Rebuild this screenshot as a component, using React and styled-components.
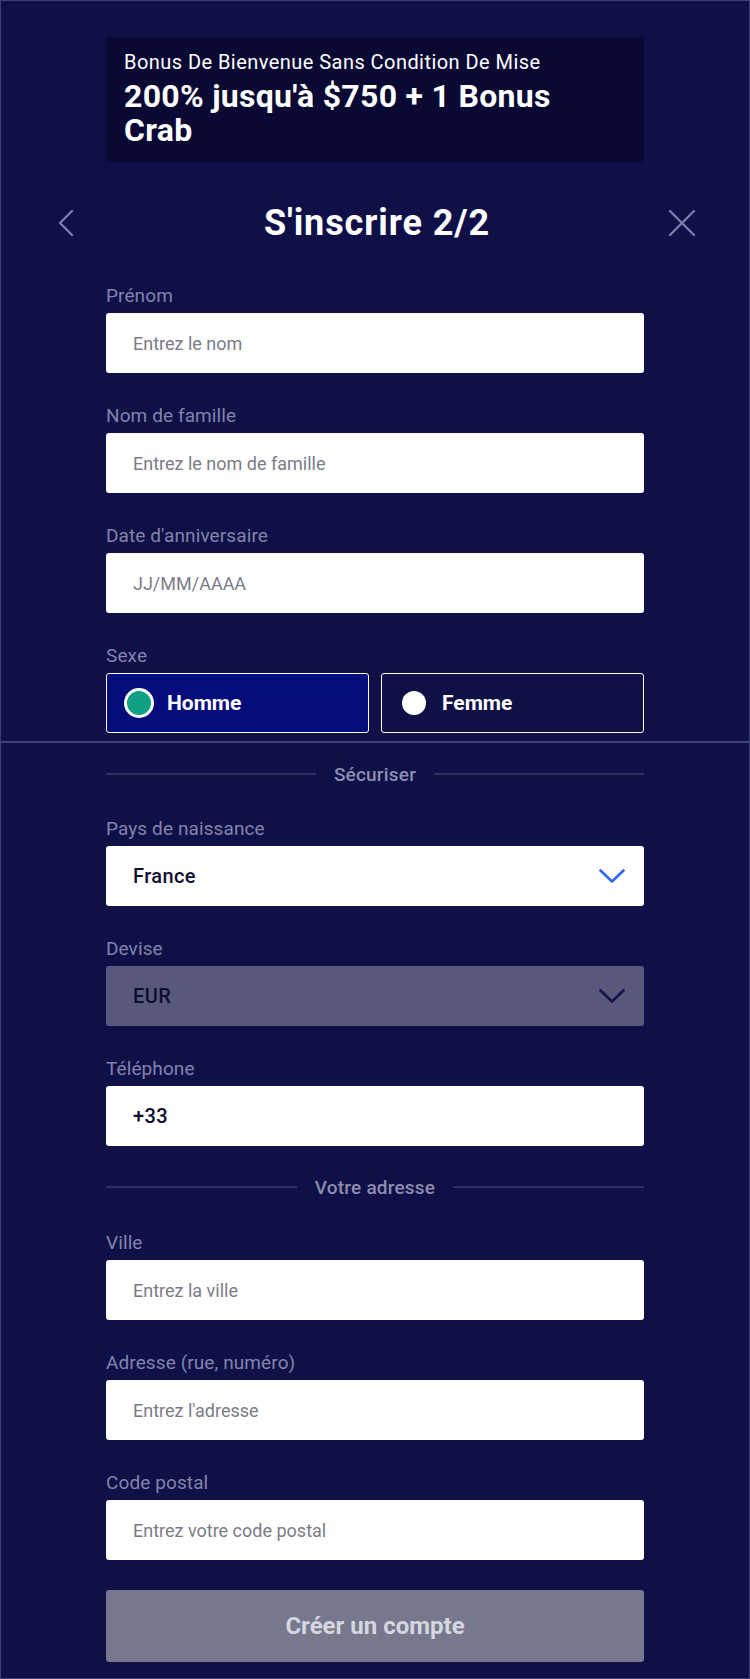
import React from 'react'
import styled, { createGlobalStyle } from 'styled-components'

const GlobalStyle = createGlobalStyle`
	* { box-sizing: border-box; }
	html, body {
		margin: 0;
		padding: 0;
		background: #0f1048;
	}
	body {
		font-family: Roboto, "Liberation Sans", sans-serif;
	}
`

const Page = styled.div`
	min-height: 1679px;
	border: 1px solid #3c3f71;
	background: #0f1048;
	padding: 36px 0 16px;
`

const Column = styled.div`
	width: 538px;
	margin: 0 auto;
`

const Bonus = styled.div`
	width: 538px;
	margin: 0 auto;
	background: #0a0934;
	padding: 14px 18px 15px;
	color: #fff;
`

const BonusLead = styled.div`
	font-size: 20px;
	line-height: 22px;
	letter-spacing: 0.45px;
`

const BonusHeadline = styled.div`
	margin-top: 6px;
	max-width: 450px;
	font-size: 32px;
	line-height: 34px;
	font-weight: 700;
	letter-spacing: 0.3px;
`

const Header = styled.div`
	display: grid;
	grid-template-columns: 1fr auto 1fr;
	align-items: center;
	height: 40px;
	margin-top: 41px;
	padding: 0 53px 0 57px;
`

const Title = styled.h1`
	margin: 0;
	font-size: 36px;
	line-height: 40px;
	font-weight: 700;
	letter-spacing: 0.9px;
	color: #fff;
`

const IconButton = styled.button`
	display: flex;
	justify-self: ${p => (p.$end ? 'end' : 'start')};
	padding: 0;
	border: 0;
	background: none;
	cursor: pointer;
`

const Form = styled.form`
	margin-top: 42px;
`

const Field = styled.div`
	display: flex;
	flex-direction: column;
	& + & {
		margin-top: 32px;
	}
`

const Label = styled.label`
	font-size: 19px;
	line-height: 22px;
	letter-spacing: 0.1px;
	color: #8384a8;
	margin-bottom: 6px;
`

const Input = styled.input`
	height: 60px;
	width: 100%;
	border: 0;
	border-radius: 3px;
	background: #fff;
	padding: 0 27px;
	font-family: inherit;
	font-size: ${p => (p.$filled ? '20px' : '18px')};
	font-weight: ${p => (p.$filled ? 500 : 400)};
	letter-spacing: ${p => (p.$filled ? '0.4px' : '0')};
	color: #0d0d30;
	outline: none;

	&::placeholder {
		color: #7b7b88;
	}
`

const Select = styled.div`
	height: 60px;
	display: flex;
	align-items: center;
	justify-content: space-between;
	border-radius: 3px;
	background: ${p => (p.$disabled ? '#58597a' : '#fff')};
	padding: 0 19px 0 27px;
	font-size: 20px;
	font-weight: 500;
	letter-spacing: 0.4px;
	color: #0d0d30;
`

const RadioGroup = styled.div`
	display: grid;
	grid-template-columns: 1fr 1fr;
	gap: 12px;
`

const RadioOption = styled.div`
	height: 60px;
	display: flex;
	align-items: center;
	gap: 13px;
	padding-left: 17px;
	border: 1px solid #fff;
	border-radius: 3px;
	background: ${p => (p.$checked ? '#050c7b' : 'transparent')};
	color: #fff;
	font-size: 21px;
	font-weight: 700;
`

const RadioSlot = styled.span`
	width: 30px;
	height: 30px;
	display: flex;
	align-items: center;
	justify-content: center;
`

const RadioDot = styled.span`
	width: ${p => (p.$checked ? '30px' : '24px')};
	height: ${p => (p.$checked ? '30px' : '24px')};
	border-radius: 50%;
	background: ${p => (p.$checked ? '#11a085' : '#fff')};
	border: ${p => (p.$checked ? '3px solid #fff' : '0')};
`

const Rule = styled.hr`
	margin: 8px 0 0;
	height: 2px;
	border: 0;
	background: #3d4274;
`

const Divider = styled.div`
	display: flex;
	align-items: center;
	gap: 18px;
	height: 22px;
	margin: ${p => p.$top}px 0 ${p => p.$bottom}px;
	font-size: 19px;
	font-weight: 500;
	letter-spacing: 0.2px;
	color: #8d8db0;
	white-space: nowrap;

	&::before,
	&::after {
		content: '';
		flex: 1;
		height: 2px;
		background: #2e325a;
	}
`

const SubmitButton = styled.button`
	display: block;
	width: 100%;
	height: 72px;
	margin-top: 30px;
	border: 0;
	border-radius: 3px;
	background: #77778e;
	font-family: inherit;
	font-size: 24px;
	font-weight: 700;
	color: #d6d6df;
`

const Chevron = ({ color }) => (
	<svg width="26" height="14" viewBox="0 0 26 14" fill="none">
		<path d="M1.5 1.5 L13 12.5 L24.5 1.5" stroke={color} strokeWidth="2.6" strokeLinecap="round" strokeLinejoin="round" />
	</svg>
)

const TextField = ({ label, placeholder, value }) => (
	<Field>
		<Label>{label}</Label>
		<Input placeholder={placeholder} defaultValue={value} $filled={!!value} />
	</Field>
)

const SelectField = ({ label, value, disabled }) => (
	<Field>
		<Label>{label}</Label>
		<Select $disabled={disabled}>
			{value}
			<Chevron color={disabled ? '#14144a' : '#3266f5'} />
		</Select>
	</Field>
)

const App = () => {
	return (
		<Page>
			<GlobalStyle />
			<Bonus>
				<BonusLead>Bonus De Bienvenue Sans Condition De Mise</BonusLead>
				<BonusHeadline>200% jusqu'à $750 + 1 Bonus Crab</BonusHeadline>
			</Bonus>

			<Header>
				<IconButton aria-label="retour">
					<svg width="16" height="28" viewBox="0 0 16 28" fill="none">
						<path d="M14 2 L2 14 L14 26" stroke="#7a7da8" strokeWidth="2.4" strokeLinecap="round" strokeLinejoin="round" />
					</svg>
				</IconButton>
				<Title>S'inscrire 2/2</Title>
				<IconButton $end aria-label="fermer">
					<svg width="28" height="28" viewBox="0 0 28 28" fill="none">
						<path d="M2 2 L26 26 M26 2 L2 26" stroke="#7a7da8" strokeWidth="2.4" strokeLinecap="round" />
					</svg>
				</IconButton>
			</Header>

			<Form onSubmit={e => e.preventDefault()}>
				<Column>
					<TextField label="Prénom" placeholder="Entrez le nom" />
					<TextField label="Nom de famille" placeholder="Entrez le nom de famille" />
					<TextField label="Date d'anniversaire" placeholder="JJ/MM/AAAA" />
					<Field>
						<Label>Sexe</Label>
						<RadioGroup>
							<RadioOption $checked>
								<RadioSlot><RadioDot $checked /></RadioSlot>
								Homme
							</RadioOption>
							<RadioOption>
								<RadioSlot><RadioDot /></RadioSlot>
								Femme
							</RadioOption>
						</RadioGroup>
					</Field>
				</Column>

				<Rule />

				<Column>
					<Divider $top={20} $bottom={33}>Sécuriser</Divider>
					<SelectField label="Pays de naissance" value="France" />
					<SelectField label="Devise" value="EUR" disabled />
					<TextField label="Téléphone" value="+33" />
					<Divider $top={30} $bottom={34}>Votre adresse</Divider>
					<TextField label="Ville" placeholder="Entrez la ville" />
					<TextField label="Adresse (rue, numéro)" placeholder="Entrez l'adresse" />
					<TextField label="Code postal" placeholder="Entrez votre code postal" />
					<SubmitButton type="submit">Créer un compte</SubmitButton>
				</Column>
			</Form>
		</Page>
	)
}

export default App
